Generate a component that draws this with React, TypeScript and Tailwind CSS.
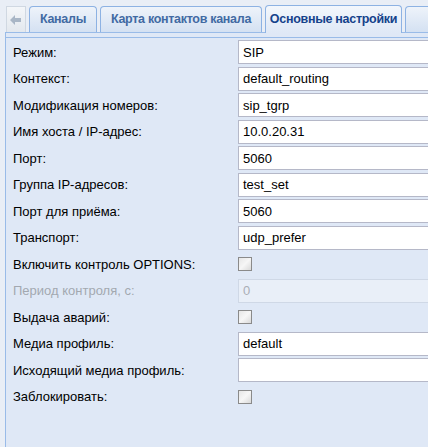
import React from 'react';

type Row = {
  label: string;
  kind: 'text' | 'check' | 'disabled';
  value?: string;
};

const rows: Row[] = [
  { label: 'Режим:', kind: 'text', value: 'SIP' },
  { label: 'Контекст:', kind: 'text', value: 'default_routing' },
  { label: 'Модификация номеров:', kind: 'text', value: 'sip_tgrp' },
  { label: 'Имя хоста / IP-адрес:', kind: 'text', value: '10.0.20.31' },
  { label: 'Порт:', kind: 'text', value: '5060' },
  { label: 'Группа IP-адресов:', kind: 'text', value: 'test_set' },
  { label: 'Порт для приёма:', kind: 'text', value: '5060' },
  { label: 'Транспорт:', kind: 'text', value: 'udp_prefer' },
  { label: 'Включить контроль OPTIONS:', kind: 'check' },
  { label: 'Период контроля, с:', kind: 'disabled', value: '0' },
  { label: 'Выдача аварий:', kind: 'check' },
  { label: 'Медиа профиль:', kind: 'text', value: 'default' },
  { label: 'Исходящий медиа профиль:', kind: 'text', value: '' },
  { label: 'Заблокировать:', kind: 'check' },
];

const Tab: React.FC<{ label: string; active?: boolean; width: string }> = ({ label, active, width }) => (
  <div
    className={
      'shrink-0 flex items-center justify-center whitespace-nowrap overflow-hidden border border-b-0 border-[#8db2e3] rounded-t-[4px] text-[12.5px] font-bold tracking-[-0.3px] ' +
      width +
      (active
        ? ' h-[28px] bg-gradient-to-b from-[#f3f7fc] to-[#dfe8f6] text-[#15428b] -mb-px relative z-10'
        : ' h-[26px] bg-gradient-to-b from-[#eef3fa] to-[#d4e1f2] text-[#416aa3]')
    }
  >
    {label}
  </div>
);

const App: React.FC = () => {
  return (
    <div
      className="w-[428px] h-[447px] overflow-hidden bg-[#e9eef6] flex flex-col"
      style={{ fontFamily: '"Liberation Sans", Arial, sans-serif' }}
    >
      <div className="flex items-end h-[32px] pl-[6px] gap-[3px] shrink-0">
        <div className="shrink-0 w-[20px] h-[26px] border border-b-0 border-[#d0d8e2] bg-gradient-to-b from-[#f4f6f9] to-[#e3e8ee] flex items-center justify-center">
          <svg width="12" height="10" viewBox="0 0 12 10">
            <path d="M0 5 L5 0 L5 3 L11 3 L11 7 L5 7 L5 10 Z" fill="#a9b6c6" />
          </svg>
        </div>
        <Tab label="Каналы" width="w-[68px]" />
        <Tab label="Карта контактов канала" width="w-[162px]" />
        <Tab label="Основные настройки" width="w-[137px]" active />
        <Tab label="" width="w-[30px]" />
      </div>
      <div className="ml-[5px] h-[5px] shrink-0 border-l border-t border-[#99bbe8] bg-[#dfe8f6]" />
      <div className="ml-[5px] flex-1 border-l border-t border-[#99bbe8] bg-[#dfe8f6] pl-[7px] pt-[1px]">
        {rows.map((r) => (
          <div key={r.label} className="flex items-center h-[26.5px]">
            <div
              className={
                'w-[225px] shrink-0 text-[13px] ' + (r.kind === 'disabled' ? 'text-[#a3a8b0]' : 'text-[#000000]')
              }
            >
              {r.label}
            </div>
            {r.kind === 'text' && (
              <div className="w-[200px] shrink-0 h-[24px] border border-[#b5b8c8] bg-white px-[4px] flex items-center text-[13px] text-black">
                {r.value}
              </div>
            )}
            {r.kind === 'disabled' && (
              <div className="w-[200px] shrink-0 h-[24px] border border-[#cfd8e6] bg-[#e9eff8] px-[4px] flex items-center text-[13px] text-[#a9aeb6]">
                {r.value}
              </div>
            )}
            {r.kind === 'check' && (
              <div className="w-[14px] h-[14px] border border-[#8a8a8a] bg-gradient-to-br from-[#e6e6e6] via-[#f6f6f6] to-[#d9d9d9]" />
            )}
          </div>
        ))}
      </div>
    </div>
  );
};

export default App;
